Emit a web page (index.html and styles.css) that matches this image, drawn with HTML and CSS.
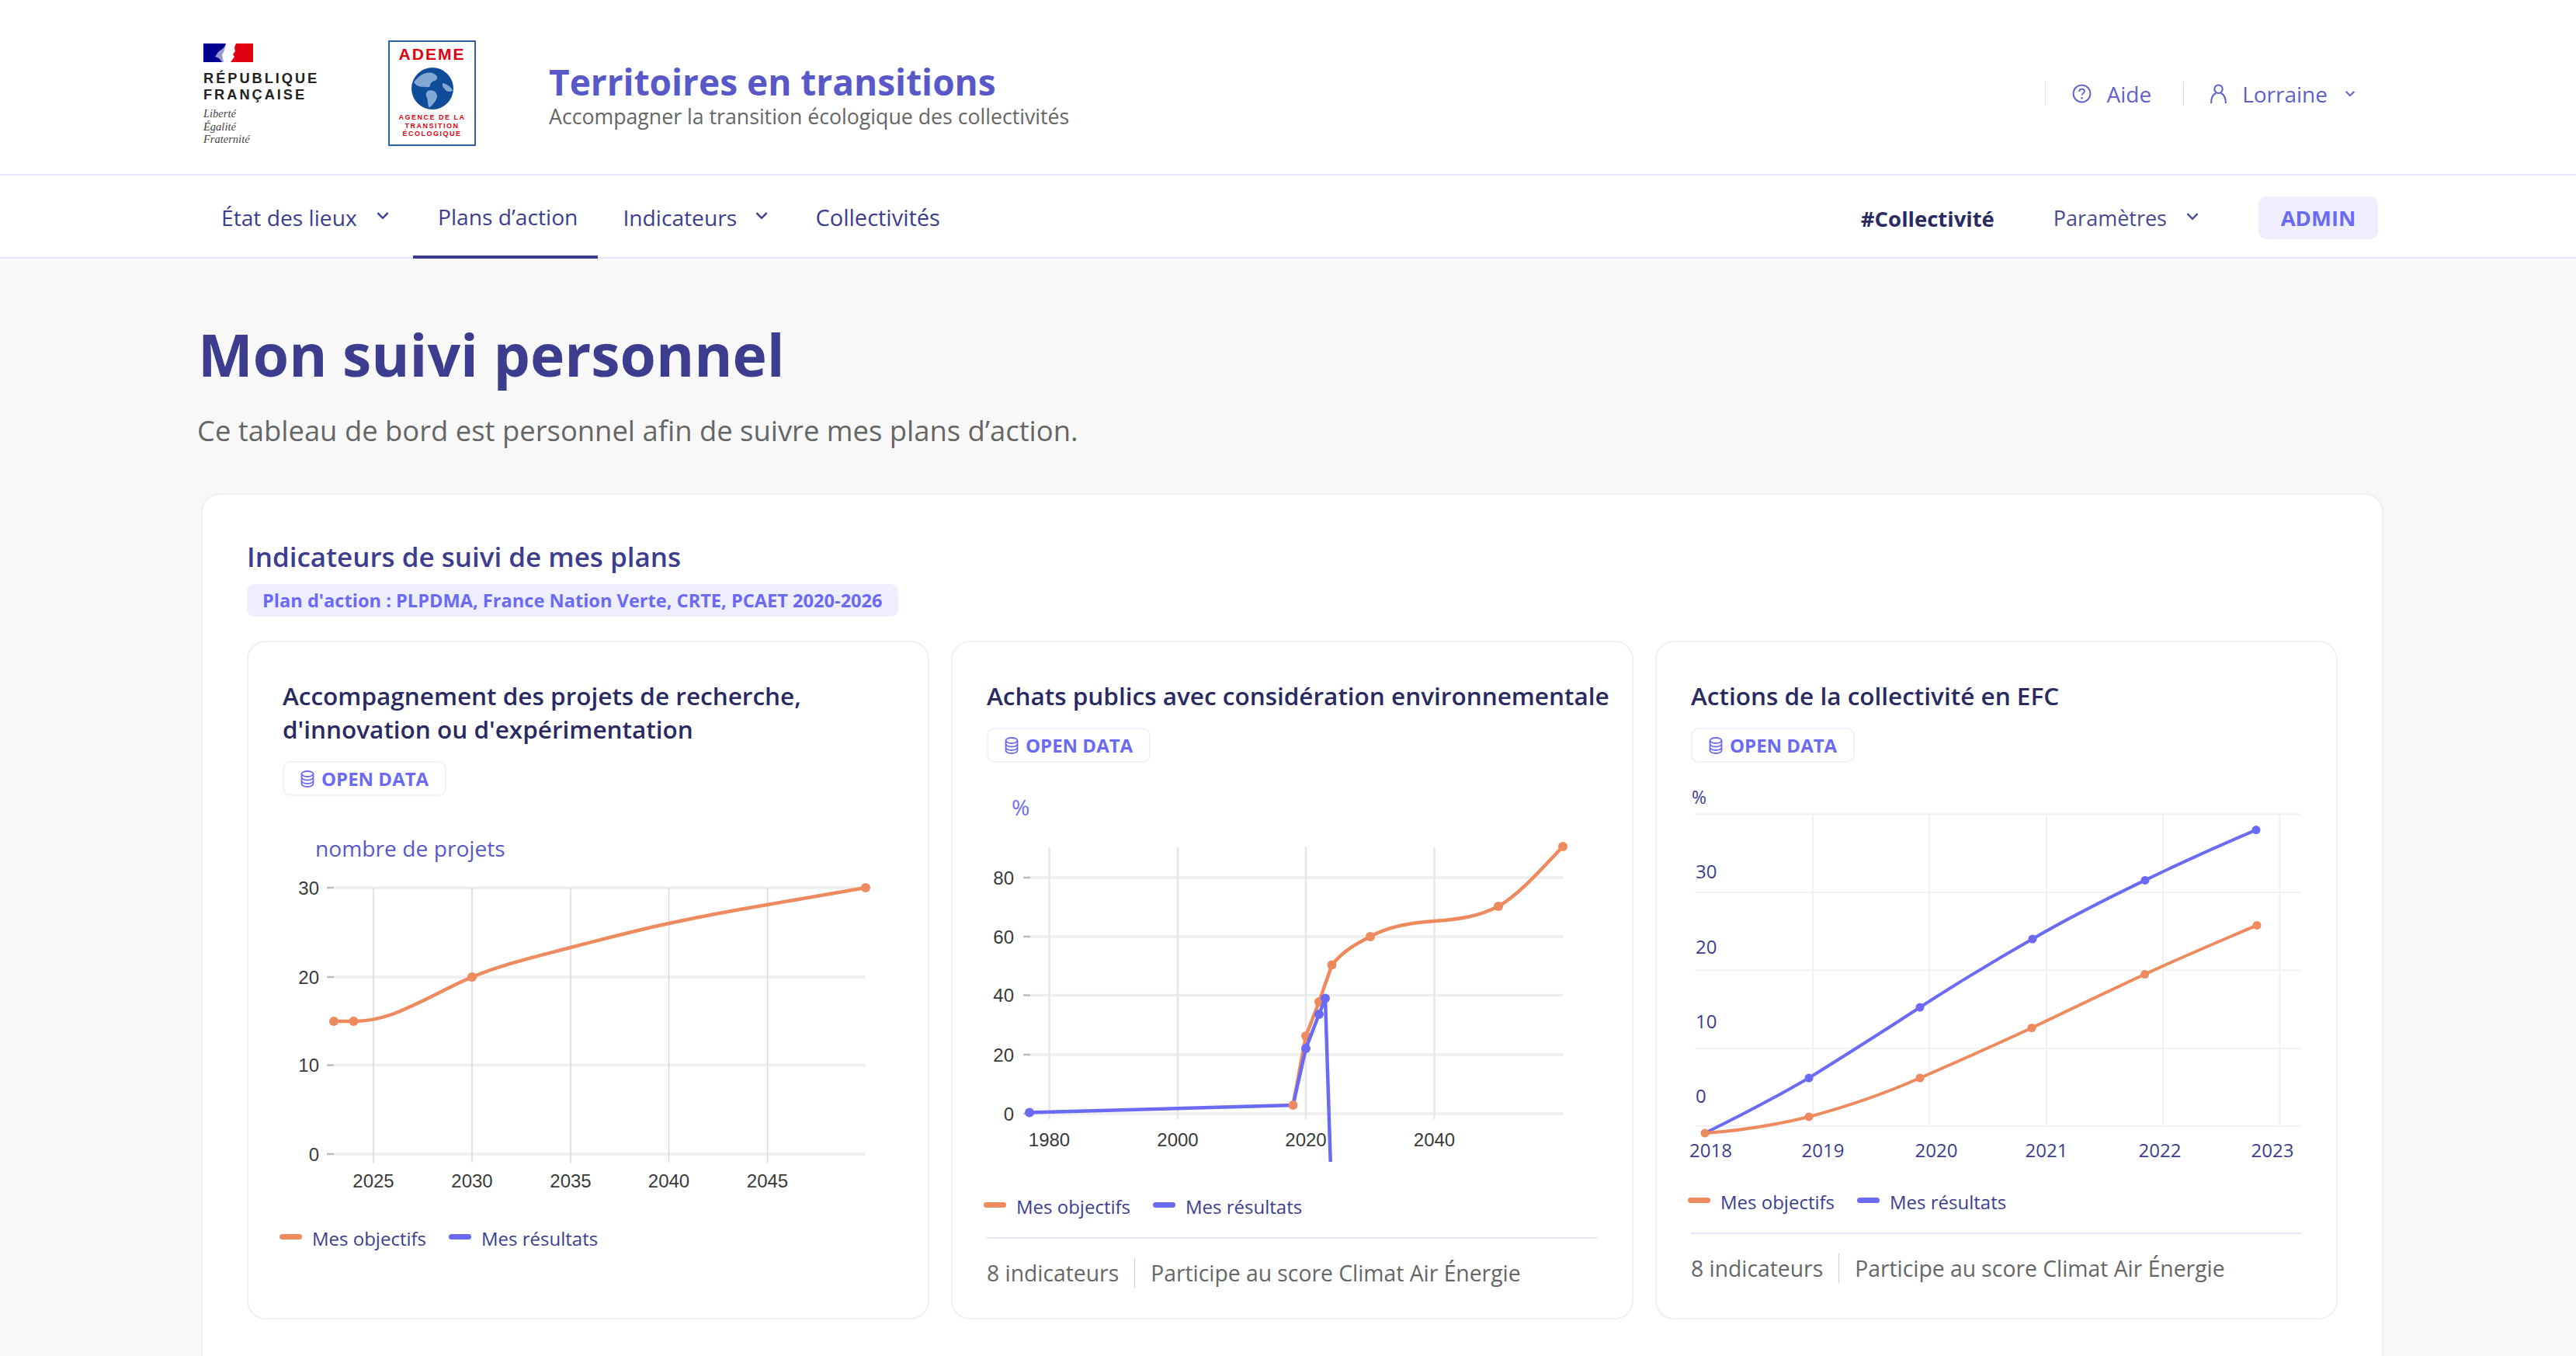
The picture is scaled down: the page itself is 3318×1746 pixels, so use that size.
FILE: index.html
```html
<!DOCTYPE html>
<html lang="fr">
<head>
  <meta charset="UTF-8" />
  <title>Territoires en transitions</title>
  <link rel="stylesheet" href="styles.css">
</head>
<body>
  <svg class="sprites" width="0" height="0">
    <symbol id="chev" viewBox="0 0 16 10"><polyline points="2,2 8,8 14,2" fill="none" stroke="currentColor" stroke-width="2.2"/></symbol>
    <symbol id="db" viewBox="0 0 18 22">
      <ellipse cx="9" cy="4.5" rx="7.5" ry="3.5" fill="none" stroke="currentColor" stroke-width="1.8"/>
      <path d="M1.5 4.5v13c0 2 3.4 3.5 7.5 3.5s7.500-1.500 7.500-3.500v-13M1.500 9c0 2 3.400 3.500 7.500 3.500s7.500-1.500 7.500-3.500M1.500 13.500c0 2 3.400 3.500 7.500 3.500s7.500-1.500 7.500-3.500" fill="none" stroke="currentColor" stroke-width="1.800"/>
    </symbol>
  </svg>

  <header class="top">
    <div class="rf">
      <svg class="flag" viewBox="0 0 64 24">
        <rect width="29" height="24" fill="#000091"/>
        <path d="M42 0H64V24H35L38 20L40 17L38 14L41 10L40 5z" fill="#e1000f"/>
        <path d="M29 0C27 6 23 8 19 11L15 17L20 19L24 24H29z" fill="#9a9ad2"/>
        <path d="M29 0C28 7 26 11 24 15L26 24H29z" fill="#fff"/>
      </svg>
      <div class="rf-name">RÉPUBLIQUE<br>FRANÇAISE</div>
      <div class="rf-motto">Liberté<br>Égalité<br>Fraternité</div>
    </div>
    <div class="ademe">
      <div class="ademe-name">ADEME</div>
      <svg class="globe" viewBox="0 0 54 54">
        <circle cx="27" cy="27" r="27" fill="#0f4c9a"/>
        <path d="M3 19c6-8 14-14 24-12 5 2 8 5 5 9-5 2-8 3-8 8-3 3-7 0-11 1-4-1-7-2-10-6z" fill="#82a8d4"/>
        <path d="M21 30c6-2 11 1 12 6 0 6-5 11-10 16-3-5-1-11-4-15-1-3 0-5 2-7z" fill="#82a8d4"/>
        <path d="M40 20c5 1 10 4 13 9-2 3-5 2-8 1-3-3-6-6-5-10z" fill="#82a8d4"/>
      </svg>
      <div class="ademe-sub">AGENCE DE LA<br>TRANSITION<br>ÉCOLOGIQUE</div>
    </div>
    <div class="brand">
      <div class="brand-name">Territoires en transitions</div>
      <div class="brand-sub">Accompagner la transition écologique des collectivités</div>
    </div>
    <div class="top-links">
      <a class="top-link">
        <svg class="ico-help" viewBox="0 0 24 24"><circle cx="12" cy="12" r="10.500" fill="none" stroke="currentColor" stroke-width="1.800"/><path d="M8.800 9.500c0-2 1.500-3.200 3.300-3.200s3.200 1.200 3.200 2.900c0 2.400-3.200 2.500-3.200 5" fill="none" stroke="currentColor" stroke-width="1.800"/><circle cx="12.100" cy="17.500" r="1.200" fill="currentColor"/></svg>
        Aide
      </a>
      <a class="top-link user">
        <svg class="ico-user" viewBox="0 0 22 24"><circle cx="11" cy="6.500" r="5" fill="none" stroke="currentColor" stroke-width="2"/><path d="M2 24c0-6 2-11 6-12.500M20 24c0-6-2-11-6-12.500" fill="none" stroke="currentColor" stroke-width="2"/></svg>
        Lorraine
        <svg class="chev chev-small"><use href="#chev"/></svg>
      </a>
    </div>
  </header>

  <nav class="nav">
    <div class="nav-left">
      <a class="nav-item item-etat">État des lieux <svg class="chev"><use href="#chev"/></svg></a>
      <a class="nav-item item-plans active">Plans d’action</a>
      <a class="nav-item item-ind">Indicateurs <svg class="chev"><use href="#chev"/></svg></a>
      <a class="nav-item item-coll">Collectivités</a>
    </div>
    <div class="nav-right">
      <span class="nav-coll">#Collectivité</span>
      <a class="nav-item item-param">Paramètres <svg class="chev"><use href="#chev"/></svg></a>
      <span class="nav-admin">ADMIN</span>
    </div>
  </nav>

  <main class="page">
    <h1>Mon suivi personnel</h1>
    <p class="lead">Ce tableau de bord est personnel afin de suivre mes plans d’action.</p>

    <section class="panel">
      <h2>Indicateurs de suivi de mes plans</h2>
      <div class="plan-tag">Plan d'action : PLPDMA, France Nation Verte, CRTE, PCAET 2020-2026</div>

      <div class="cards">
        <article class="card">
          <h3>Accompagnement des projets de recherche,<br>d'innovation ou d'expérimentation</h3>
          <span class="open"><svg class="ico-db"><use href="#db"/></svg>OPEN DATA</span>
          <svg class="chart chart-a" viewBox="364 1040 785 530">
            <text class="unit" x="406" y="1103">nombre de projets</text>
            <g class="grid-h">
              <line x1="430" x2="1115" y1="1143" y2="1143"/>
              <line x1="430" x2="1115" y1="1258" y2="1258"/>
              <line x1="430" x2="1115" y1="1371.500" y2="1371.500"/>
              <line x1="430" x2="1115" y1="1486" y2="1486"/>
            </g>
            <g class="tick">
              <line x1="421" x2="430" y1="1143" y2="1143"/>
              <line x1="421" x2="430" y1="1258" y2="1258"/>
              <line x1="421" x2="430" y1="1371.500" y2="1371.500"/>
              <line x1="421" x2="430" y1="1486" y2="1486"/>
            </g>
            <g class="grid-v">
              <line x1="481" x2="481" y1="1143" y2="1497"/>
              <line x1="608" x2="608" y1="1143" y2="1497"/>
              <line x1="735" x2="735" y1="1143" y2="1497"/>
              <line x1="861.500" x2="861.500" y1="1143" y2="1497"/>
              <line x1="988.500" x2="988.500" y1="1143" y2="1497"/>
            </g>
            <g class="lab lab-y">
              <text x="411" y="1152">30</text>
              <text x="411" y="1267">20</text>
              <text x="411" y="1380">10</text>
              <text x="411" y="1495">0</text>
            </g>
            <g class="lab lab-x">
              <text x="481" y="1529">2025</text>
              <text x="608" y="1529">2030</text>
              <text x="735" y="1529">2035</text>
              <text x="861.500" y="1529">2040</text>
              <text x="988.500" y="1529">2045</text>
            </g>
            <path class="line orange" d="M430 1315L455.500 1315C472 1315 488 1312 505 1306C540 1293 575 1272 608 1258C650 1241 693 1231 735 1220C777 1209 819 1198 861.500 1189C903 1180 946 1172 988 1165C1030 1158 1073 1150 1115 1143"/>
            <g class="dots orange">
              <circle cx="430" cy="1315" r="6"/><circle cx="455.500" cy="1315" r="6"/><circle cx="608" cy="1258" r="6"/><circle cx="1115" cy="1143" r="6"/>
            </g>
          </svg>
          <div class="legend legend-a">
            <span class="key key-orange"></span><span class="key-text">Mes objectifs</span>
            <span class="key key-blue"></span><span class="key-text">Mes résultats</span>
          </div>
        </article>

        <article class="card">
          <h3>Achats publics avec considération environnementale</h3>
          <span class="open"><svg class="ico-db"><use href="#db"/></svg>OPEN DATA</span>
          <svg class="chart chart-b" viewBox="1271 997 785 534">
            <text class="unit unit-pct" x="1303" y="1050">%</text>
            <g class="grid-h">
              <line x1="1327" x2="2013" y1="1130" y2="1130"/>
              <line x1="1327" x2="2013" y1="1206" y2="1206"/>
              <line x1="1327" x2="2013" y1="1281.500" y2="1281.500"/>
              <line x1="1327" x2="2013" y1="1358" y2="1358"/>
              <line x1="1327" x2="2013" y1="1434" y2="1434"/>
            </g>
            <g class="tick">
              <line x1="1318" x2="1327" y1="1130" y2="1130"/>
              <line x1="1318" x2="1327" y1="1206" y2="1206"/>
              <line x1="1318" x2="1327" y1="1281.500" y2="1281.500"/>
              <line x1="1318" x2="1327" y1="1358" y2="1358"/>
              <line x1="1318" x2="1327" y1="1434" y2="1434"/>
            </g>
            <g class="grid-v grid-v-wide">
              <line x1="1351.500" x2="1351.500" y1="1091" y2="1441"/>
              <line x1="1517" x2="1517" y1="1091" y2="1441"/>
              <line x1="1682" x2="1682" y1="1091" y2="1441"/>
              <line x1="1847.500" x2="1847.500" y1="1091" y2="1441"/>
            </g>
            <g class="lab lab-y">
              <text x="1306" y="1139">80</text>
              <text x="1306" y="1215">60</text>
              <text x="1306" y="1290">40</text>
              <text x="1306" y="1367">20</text>
              <text x="1306" y="1443">0</text>
            </g>
            <g class="lab lab-x">
              <text x="1351.500" y="1476">1980</text>
              <text x="1517" y="1476">2000</text>
              <text x="1682" y="1476">2020</text>
              <text x="1847.500" y="1476">2040</text>
            </g>
            <path class="line orange" d="M1665.500 1423L1682 1334L1699 1290L1715.500 1242.500C1730 1225 1745 1216 1765 1206C1790 1192 1820 1188 1847.500 1186C1880 1183.500 1905 1180 1930 1167C1955 1153 1985 1120 2013 1090"/>
            <g class="dots orange">
              <circle cx="1682" cy="1334" r="6"/><circle cx="1699" cy="1290" r="6"/><circle cx="1715.500" cy="1242.500" r="6"/><circle cx="1765" cy="1206" r="6"/><circle cx="1930" cy="1167" r="6"/><circle cx="2013" cy="1090" r="6"/>
            </g>
            <path class="line blue" d="M1326 1432.500L1665.500 1423L1682 1350L1699 1306L1707 1285.500L1713.700 1496"/>
            <g class="dots blue">
              <circle cx="1326" cy="1432.500" r="6"/><circle cx="1682" cy="1350" r="6"/><circle cx="1699" cy="1306" r="6"/><circle cx="1707" cy="1285.500" r="6"/>
            </g>
            <circle class="dots orange" cx="1665.500" cy="1423" r="6"/>
          </svg>
          <div class="legend">
            <span class="key key-orange"></span><span class="key-text">Mes objectifs</span>
            <span class="key key-blue"></span><span class="key-text">Mes résultats</span>
          </div>
          <div class="card-foot">
            <span>8 indicateurs</span>
            <span class="foot-sep"></span>
            <span>Participe au score Climat Air Énergie</span>
          </div>
        </article>

        <article class="card card-c">
          <h3>Actions de la collectivité en EFC</h3>
          <span class="open"><svg class="ico-db"><use href="#db"/></svg>OPEN DATA</span>
          <svg class="chart chart-c" viewBox="2178 997 785 528">
            <text class="pct-small" x="2179" y="1035">%</text>
            <g class="grid-c">
              <line x1="2183" x2="2963" y1="1048.500" y2="1048.500"/>
              <line x1="2183" x2="2963" y1="1149" y2="1149"/>
              <line x1="2183" x2="2963" y1="1249.500" y2="1249.500"/>
              <line x1="2183" x2="2963" y1="1350" y2="1350"/>
              <line x1="2183" x2="2963" y1="1450" y2="1450"/>
              <line x1="2335" x2="2335" y1="1048" y2="1450"/>
              <line x1="2485" x2="2485" y1="1048" y2="1450"/>
              <line x1="2636" x2="2636" y1="1048" y2="1450"/>
              <line x1="2786" x2="2786" y1="1048" y2="1450"/>
              <line x1="2936.500" x2="2936.500" y1="1048" y2="1450"/>
            </g>
            <g class="lab-c">
              <text x="2184" y="1131">30</text>
              <text x="2184" y="1228">20</text>
              <text x="2184" y="1324">10</text>
              <text x="2184" y="1420">0</text>
            </g>
            <g class="lab-c lab-x">
              <text x="2203.500" y="1490">2018</text>
              <text x="2348" y="1490">2019</text>
              <text x="2494" y="1490">2020</text>
              <text x="2636" y="1490">2021</text>
              <text x="2782" y="1490">2022</text>
              <text x="2927" y="1490">2023</text>
            </g>
            <path class="line blue thin" d="M2196 1459C2241 1437 2285 1414 2330 1388C2378 1358 2426 1328 2473 1297C2521 1266 2569 1237 2618 1209C2666 1181 2714 1157 2763 1133.400C2811 1110 2858 1089 2906 1068.600"/>
            <g class="dots blue">
              <circle cx="2330" cy="1388" r="5.500"/><circle cx="2473" cy="1297" r="5.500"/><circle cx="2618" cy="1209" r="5.500"/><circle cx="2763" cy="1133.400" r="5.500"/><circle cx="2906" cy="1068.600" r="5.500"/>
            </g>
            <path class="line orange thin" d="M2196 1459C2240 1456 2285 1449 2330 1438C2378 1425 2426 1409 2473 1388C2521 1367 2569 1346 2617 1323.500C2666 1300 2714 1277 2762.600 1254.500C2811 1232 2859 1212 2907 1191.400"/>
            <g class="dots orange">
              <circle cx="2196" cy="1459" r="5.500"/><circle cx="2330" cy="1438" r="5.500"/><circle cx="2473" cy="1388" r="5.500"/><circle cx="2617" cy="1323.500" r="5.500"/><circle cx="2762.600" cy="1254.500" r="5.500"/><circle cx="2907" cy="1191.400" r="5.500"/>
            </g>
          </svg>
          <div class="legend">
            <span class="key key-orange"></span><span class="key-text">Mes objectifs</span>
            <span class="key key-blue"></span><span class="key-text">Mes résultats</span>
          </div>
          <div class="card-foot">
            <span>8 indicateurs</span>
            <span class="foot-sep"></span>
            <span>Participe au score Climat Air Énergie</span>
          </div>
        </article>
      </div>
    </section>
  </main>
</body>
</html>
```

FILE: styles.css
```css
html, body {
  margin: 0;
  height: 100%;
  overflow: hidden;
}
body {
  font-family: "Open Sans", "Noto Sans", sans-serif;
  background-color: #f8f8f8;
  color: #3d3d8f;
}
.sprites {
  position: absolute;
}

/* header */
.top {
  height: 226px;
  box-sizing: border-box;
  background: #fff;
  border-bottom: 2px solid #e6e6fb;
  display: flex;
  align-items: flex-start;
  padding-left: 262px;
}
.rf {
  width: 238px;
  padding-top: 56px;
}
.flag {
  display: block;
  width: 64px;
  height: 24px;
}
.rf-name {
  font-family: "Liberation Sans", sans-serif;
  font-size: 18.200px;
  letter-spacing: 3px;
  line-height: 21px;
  font-weight: bold;
  color: #222;
  margin-top: 11px;
}
.rf-motto {
  font-family: "Liberation Serif", serif;
  font-style: italic;
  font-size: 14.500px;
  line-height: 16.500px;
  color: #444;
  margin-top: 5px;
}
.ademe {
  width: 113px;
  height: 136px;
  box-sizing: border-box;
  margin-top: 52px;
  border: 2px solid #2a63a9;
  text-align: center;
  color: #e1000f;
  font-family: "Liberation Sans", sans-serif;
  font-weight: bold;
}
.ademe-name {
  font-size: 21px;
  letter-spacing: 2px;
  line-height: 20px;
  margin-top: 6px;
}
.globe {
  display: block;
  width: 54px;
  height: 54px;
  margin: 7px auto 0;
}
.ademe-sub {
  font-size: 9px;
  letter-spacing: 1.500px;
  line-height: 10.500px;
  margin-top: 5px;
}
.brand {
  margin-left: 94px;
  padding-top: 76px;
}
.brand-name {
  font-size: 46px;
  line-height: 58px;
  font-weight: 700;
  color: #5858c8;
}
.brand-sub {
  font-size: 26.700px;
  line-height: 32px;
  color: #666;
  margin-top: 0;
}
.top-links {
  margin-left: auto;
  margin-top: 105px;
  margin-right: 283px;
  display: flex;
  color: #5f5fd0;
  font-size: 28px;
}
.top-link {
  display: flex;
  align-items: center;
  height: 31px;
  border-left: 1px solid #ddd;
  padding: 0 41px 0 34px;
  gap: 19px;
}
.top-link.user {
  padding: 0 0 0 33px;
}
.ico-help {
  width: 25px;
  height: 25px;
}
.ico-user {
  width: 23px;
  height: 25px;
}
.chev {
  width: 18px;
  height: 11px;
  color: inherit;
}
.chev-small {
  width: 16px;
  height: 9px;
  margin-left: 2px;
}

/* second bar */
.nav {
  height: 107px;
  box-sizing: border-box;
  background: #fff;
  border-bottom: 2px solid #e6e6fb;
  display: flex;
  justify-content: space-between;
  padding: 0 255px 0 255px;
}
.nav-left {
  display: flex;
}
.nav-item {
  display: flex;
  align-items: center;
  height: 105px;
  box-sizing: border-box;
  font-size: 28.200px;
  color: #3d3d8f;
  white-space: pre;
  padding-top: 2px;
}
.nav-item .chev {
  margin-bottom: 5px;
}
.item-etat {
  padding-left: 30px;
}
.item-etat .chev {
  margin-left: 17px;
}
.item-plans {
  margin-left: 30px;
  padding: 2px 26px 0 32px;
  height: 107px;
  border-bottom: 4px solid #3d3d8f;
}
.item-ind {
  margin-left: 32px;
}
.item-ind .chev {
  margin-left: 15px;
}
.item-coll {
  margin-left: 61px;
  font-size: 29px;
}
.nav-right {
  display: flex;
  align-items: center;
}
.nav-coll {
  margin-top: 5px;
  font-size: 27.500px;
  font-weight: 700;
  color: #2a2a62;
}
.item-param {
  margin-left: 76px;
  padding-top: 4px;
  font-size: 27px;
  color: #4a4a90;
}
.item-param .chev {
  margin-left: 17px;
}
.nav-admin {
  margin-left: 76px;
  margin-top: 4px;
  width: 154px;
  height: 55px;
  line-height: 55px;
  text-align: center;
  background: #eeeeff;
  border-radius: 10px;
  color: #6a6af4;
  font-size: 27.500px;
  font-weight: 700;
}

/* page */
.page {
  padding-left: 255px;
}
h1 {
  margin: 0;
  padding-top: 73px;
  font-size: 75px;
  line-height: 100px;
  font-weight: 700;
  color: #3d3d8f;
}
.lead {
  margin: 24px 0 0 -1px;
  font-size: 36.400px;
  line-height: 48px;
  color: #666;
}
.panel {
  margin: 57px 0 0 4px;
  width: 2811px;
  box-sizing: border-box;
  background: #fff;
  border: 2px solid #f0f0f0;
  border-radius: 24px;
  padding: 58px 57px 100px;
}
h2 {
  margin: 0;
  font-size: 35px;
  line-height: 44px;
  font-weight: 600;
  color: #3d3d8f;
}
.plan-tag {
  display: inline-block;
  margin-top: 13px;
  padding: 0 20px;
  height: 42px;
  line-height: 42px;
  border-radius: 10px;
  background: #eeeeff;
  color: #6a6af4;
  font-size: 23.600px;
  font-weight: 700;
}
.cards {
  margin-top: 31px;
  display: grid;
  grid-template-columns: repeat(3, 879px);
  gap: 28px;
}
.card {
  box-sizing: border-box;
  height: 874px;
  border: 2px solid #f0f0f0;
  border-radius: 24px;
  padding: 47px 44px 0;
  display: flex;
  flex-direction: column;
  align-items: flex-start;
}
h3 {
  margin: 0;
  font-size: 31.500px;
  line-height: 43px;
  font-weight: 600;
  color: #2a2a62;
  white-space: nowrap;
}
.open {
  margin-top: 20px;
  height: 45px;
  box-sizing: border-box;
  display: inline-flex;
  align-items: center;
  gap: 9px;
  padding: 0 21px;
  border: 2px solid #f0f0ff;
  border-radius: 10px;
  color: #6a6af4;
  font-size: 24px;
  font-weight: 700;
}
.ico-db {
  width: 18px;
  height: 22px;
}
.chart {
  display: block;
  width: 785px;
  margin-top: 15px;
  overflow: visible;
}
.chart-a {
  height: 530px;
}
.chart-b {
  height: 534px;
}
.chart-c {
  height: 528px;
}
.unit {
  font-size: 28.200px;
  fill: #5858c8;
}
.unit-pct {
  fill: #6a6af4;
}
.pct-small {
  font-size: 23px;
  fill: #3d3d8f;
}
.grid-h line {
  stroke: #eeeeee;
  stroke-width: 3.500;
}
.tick line {
  stroke: #bbb;
  stroke-width: 2.500;
}
.grid-v line {
  stroke: #d9d9d9;
  stroke-width: 1.500;
}
.grid-v-wide line {
  stroke: #e6e6e6;
  stroke-width: 2.500;
}
.grid-c line {
  stroke: #f1f1f1;
  stroke-width: 2;
}
.lab {
  font-family: "Liberation Sans", sans-serif;
  font-size: 24px;
  fill: #3a3a3a;
}
.lab-y {
  text-anchor: end;
}
.lab-x {
  text-anchor: middle;
}
.lab-c {
  font-size: 24px;
  fill: #3d3d8f;
}
.line {
  fill: none;
  stroke-width: 4.500;
}
.line.thin {
  stroke-width: 4;
}
.line.orange {
  stroke: #ee8a5e;
}
.line.blue {
  stroke: #6a6af4;
}
.dots.orange {
  fill: #ee8a5e;
}
.dots.blue {
  fill: #6a6af4;
}
.legend {
  margin: 7px 0 0 -4px;
  height: 30px;
  display: flex;
  align-items: center;
  font-size: 24px;
  color: #3d3d8f;
}
.legend-a {
  margin-top: 9px;
}
.key {
  width: 29px;
  height: 7px;
  border-radius: 4px;
  margin-right: 13px;
  margin-bottom: 4px;
}
.key-orange {
  background: #ee8a5e;
}
.key-blue {
  background: #6a6af4;
  margin-left: 29px;
}
.card-foot {
  margin-top: 25px;
  width: 786px;
  box-sizing: border-box;
  border-top: 2px solid #e6e6fb;
  padding-top: 24px;
  display: flex;
  align-items: center;
  font-size: 28.300px;
  line-height: 40px;
  color: #666;
}
.foot-sep {
  width: 1px;
  height: 38px;
  background: #ccc;
  margin: 0 20px;
}
```
